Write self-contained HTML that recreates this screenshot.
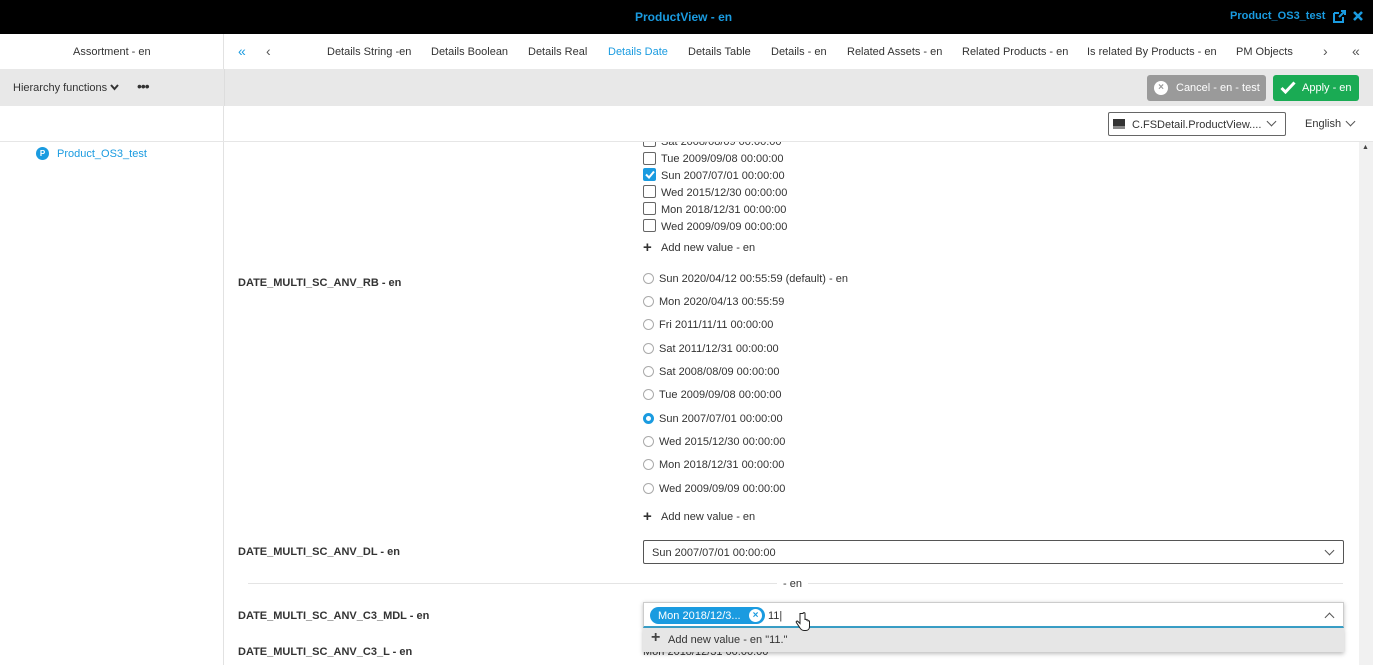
<!DOCTYPE html>
<html><head><meta charset="utf-8"><style>
*{margin:0;padding:0;box-sizing:border-box}
body{width:1373px;height:665px;overflow:hidden;position:relative;background:#fff;font-family:"Liberation Sans",Arial,sans-serif;font-size:11px;color:#333}
.a{position:absolute;white-space:nowrap}
.cb{position:absolute;width:13px;height:13px;border:1px solid #666;border-radius:2px;background:#fff}
.rd{position:absolute;width:11px;height:11px;border:1px solid #aaa;border-radius:50%;background:#fff}
.lbl{position:absolute;font-weight:bold;color:#333;white-space:nowrap}
.chev{position:absolute;width:7px;height:7px;border-right:1.3px solid #555;border-bottom:1.3px solid #555;transform:rotate(45deg)}
.chevu{position:absolute;width:7px;height:7px;border-left:1.3px solid #555;border-top:1.3px solid #555;transform:rotate(45deg)}
</style></head><body>
<div class="a" style="left:0;top:0;width:1373px;height:34px;background:#000"></div>
<div class="a" style="left:635px;top:10px;color:#1a9be0;font-weight:bold;font-size:12px">ProductView - en</div>
<div class="a" style="left:1230px;top:10px;color:#1a9be0;font-weight:bold;font-size:11px">Product_OS3_test</div>
<svg class="a" style="left:1333px;top:10px" width="13" height="13" viewBox="0 0 13 13"><path d="M1 3h5M1 3v9h9V7" stroke="#1a9be0" stroke-width="2" fill="none"/><path d="M6 7l5-5M8 1h4v4" stroke="#1a9be0" stroke-width="2" fill="none"/></svg>
<svg class="a" style="left:1352px;top:10px" width="12" height="12" viewBox="0 0 12 12"><path d="M2 2l8 8M10 2l-8 8" stroke="#1a9be0" stroke-width="2.6"/></svg>

<div class="a" style="left:0;top:34px;width:224px;height:631px;border-right:1px solid #e2e2e2"></div>
<div class="a" style="left:73px;top:46px">Assortment - en</div>
<div class="a" style="left:238px;top:43px;color:#1a9be0;font-size:14px">«</div>
<div class="a" style="left:266px;top:43px;font-size:14px;color:#555">‹</div>
<div class="a" style="left:327px;top:46px">Details String -en</div>
<div class="a" style="left:431px;top:46px">Details Boolean</div>
<div class="a" style="left:528px;top:46px">Details Real</div>
<div class="a" style="left:608px;top:46px;color:#1a9be0">Details Date</div>
<div class="a" style="left:688px;top:46px">Details Table</div>
<div class="a" style="left:771px;top:46px">Details - en</div>
<div class="a" style="left:847px;top:46px">Related Assets - en</div>
<div class="a" style="left:962px;top:46px">Related Products - en</div>
<div class="a" style="left:1087px;top:46px">Is related By Products - en</div>
<div class="a" style="left:1236px;top:46px">PM Objects</div>
<div class="a" style="left:1323px;top:43px;font-size:14px;color:#555">›</div>
<div class="a" style="left:1352px;top:43px;font-size:14px;color:#555">«</div>

<div class="a" style="left:0;top:69px;width:1373px;height:37px;background:#e8e8e8"></div>
<div class="a" style="left:224px;top:69px;width:1px;height:37px;background:#ddd"></div>
<div class="a" style="left:13px;top:82px">Hierarchy functions</div>
<svg class="a" style="left:110px;top:84px" width="9" height="7" viewBox="0 0 9 7"><path d="M1 1l3.5 4L8 1" stroke="#333" stroke-width="2" fill="none"/></svg>
<div class="a" style="left:137px;top:78px;font-size:14px;letter-spacing:-1px">•••</div>
<div class="a" style="left:1147px;top:75px;width:119px;height:26px;background:#9a9a9a;border-radius:3px;color:#fff;padding:7px 0 0 29px">Cancel - en - test</div>
<div class="a" style="left:1154px;top:81px;width:14px;height:14px;border-radius:50%;background:#fff;color:#9a9a9a;font-size:10px;font-weight:bold;text-align:center;line-height:14px">×</div>
<div class="a" style="left:1273px;top:75px;width:86px;height:26px;background:#1aab54;border-radius:3px;color:#fff;padding:7px 0 0 29px">Apply - en</div>
<svg class="a" style="left:1280px;top:81px" width="16" height="13" viewBox="0 0 16 13"><path d="M1.5 7l4 4 9-9.5" stroke="#fff" stroke-width="3" fill="none"/></svg>

<div class="a" style="left:0;top:141px;width:1373px;height:1px;background:#e6e6e6"></div>
<div class="a" style="left:1108px;top:112px;width:178px;height:24px;border:1px solid #666;border-radius:2px;padding:6px 0 0 23px">C.FSDetail.ProductView....</div>
<div class="a" style="left:1113px;top:119px;width:12px;height:10px;background:linear-gradient(#333 70%,#888 70%)"></div>
<div class="chev" style="left:1268px;top:118px"></div>
<div class="a" style="left:1305px;top:118px">English</div>
<div class="chev" style="left:1347px;top:118px"></div>

<div class="a" style="left:36px;top:147px;width:13px;height:13px;border-radius:50%;background:#1a9be0;color:#fff;font-size:8px;font-weight:bold;text-align:center;line-height:13px">P</div>
<div class="a" style="left:57px;top:148px;color:#1a9be0">Product_OS3_test</div>

<div class="a" style="left:1359px;top:142px;width:14px;height:523px;background:#f1f1f1"></div>
<div class="a" style="left:1362px;top:144px;font-size:7px;color:#444">▲</div>

<div class="a" style="left:225px;top:142px;width:1134px;height:523px;overflow:hidden">
<div class="cb" style="left:418px;top:-8px"></div><div class="a" style="left:436px;top:-6px">Sat 2008/08/09 00:00:00</div>
<div class="cb" style="left:418px;top:10px"></div><div class="a" style="left:436px;top:11px">Tue 2009/09/08 00:00:00</div>
<div class="cb" style="left:418px;top:26px;background:#1a9be0;border-color:#1a9be0"></div>
<svg class="a" style="left:420px;top:28px" width="10" height="9" viewBox="0 0 10 9"><path d="M1 4.5l3 3 5-6" stroke="#fff" stroke-width="2" fill="none"/></svg>
<div class="a" style="left:436px;top:28px">Sun 2007/07/01 00:00:00</div>
<div class="cb" style="left:418px;top:43px"></div><div class="a" style="left:436px;top:45px">Wed 2015/12/30 00:00:00</div>
<div class="cb" style="left:418px;top:60px"></div><div class="a" style="left:436px;top:62px">Mon 2018/12/31 00:00:00</div>
<div class="cb" style="left:418px;top:77px"></div><div class="a" style="left:436px;top:79px">Wed 2009/09/09 00:00:00</div>
<div class="a" style="left:418px;top:98px;font-size:15px;font-weight:bold;line-height:15px">+</div><div class="a" style="left:436px;top:100px">Add new value - en</div>

<div class="lbl" style="left:13px;top:135px">DATE_MULTI_SC_ANV_RB - en</div>
<div class="rd" style="left:418px;top:131px"></div><div class="a" style="left:434px;top:131px">Sun 2020/04/12 00:55:59 (default) - en</div>
<div class="rd" style="left:418px;top:154px"></div><div class="a" style="left:434px;top:154px">Mon 2020/04/13 00:55:59</div>
<div class="rd" style="left:418px;top:177px"></div><div class="a" style="left:434px;top:177px">Fri 2011/11/11 00:00:00</div>
<div class="rd" style="left:418px;top:201px"></div><div class="a" style="left:434px;top:201px">Sat 2011/12/31 00:00:00</div>
<div class="rd" style="left:418px;top:224px"></div><div class="a" style="left:434px;top:224px">Sat 2008/08/09 00:00:00</div>
<div class="rd" style="left:418px;top:247px"></div><div class="a" style="left:434px;top:247px">Tue 2009/09/08 00:00:00</div>
<div class="rd" style="left:418px;top:271px;border:3px solid #1a9be0"></div><div class="a" style="left:434px;top:271px">Sun 2007/07/01 00:00:00</div>
<div class="rd" style="left:418px;top:294px"></div><div class="a" style="left:434px;top:294px">Wed 2015/12/30 00:00:00</div>
<div class="rd" style="left:418px;top:317px"></div><div class="a" style="left:434px;top:317px">Mon 2018/12/31 00:00:00</div>
<div class="rd" style="left:418px;top:341px"></div><div class="a" style="left:434px;top:341px">Wed 2009/09/09 00:00:00</div>
<div class="a" style="left:418px;top:367px;font-size:15px;font-weight:bold;line-height:15px">+</div><div class="a" style="left:436px;top:369px">Add new value - en</div>

<div class="lbl" style="left:13px;top:404px">DATE_MULTI_SC_ANV_DL - en</div>
<div class="a" style="left:418px;top:398px;width:701px;height:24px;border:1px solid #555;border-radius:2px;padding:6px 0 0 8px">Sun 2007/07/01 00:00:00</div>
<div class="chev" style="left:1101px;top:405px"></div>

<div class="a" style="left:23px;top:441px;width:1095px;height:1px;background:#e4e4e4"></div>
<div class="a" style="left:552px;top:436px;background:#fff;padding:0 6px">- en</div>

<div class="lbl" style="left:13px;top:468px">DATE_MULTI_SC_ANV_C3_MDL - en</div>
<div class="lbl" style="left:13px;top:504px">DATE_MULTI_SC_ANV_C3_L - en</div>
<div class="a" style="left:418px;top:504px">Mon 2018/12/31 00:00:00</div>
<div class="a" style="left:418px;top:460px;width:701px;height:26px;border:1px solid #ccc;border-bottom:2px solid #3aa0c8;background:#fff;box-shadow:0 1px 4px rgba(0,0,0,.25)"></div>
<div class="a" style="left:425px;top:465px;width:115px;height:17px;border-radius:9px;background:#1a9be0;color:#fff;padding:3px 0 0 8px">Mon 2018/12/3...</div>
<div class="a" style="left:524px;top:467px;width:13px;height:13px;border-radius:50%;background:#fff;color:#1a9be0;font-size:10px;font-weight:bold;text-align:center;line-height:13px">×</div>
<div class="a" style="left:543px;top:468px">11|</div>
<div class="chevu" style="left:1101px;top:472px"></div>
<div class="a" style="left:418px;top:486px;width:701px;height:24px;background:#e6e6e6;box-shadow:0 2px 4px rgba(0,0,0,.25);padding:6px 0 0 25px">Add new value - en "11."</div>
<div class="a" style="left:426px;top:488px;font-size:16px;font-weight:bold;color:#444;line-height:16px">+</div>
<svg class="a" style="left:570px;top:470px" width="16" height="20" viewBox="0 0 16 20"><path d="M5 1.5v10l-2-2c-1-1-2.5 0-1.5 1.2L5 16c1 1.5 2 2.5 4 2.5h2c2 0 3.5-1.5 3.5-4V9.5c0-1-1.5-1-1.5 0V8.5c0-1-1.5-1-1.5 0V8c0-1-1.5-1-1.5 0V1.5c0-1.2-2-1.2-2 0z" fill="#fff" stroke="#222" stroke-width="1"/></svg>
</div>
</body></html>
